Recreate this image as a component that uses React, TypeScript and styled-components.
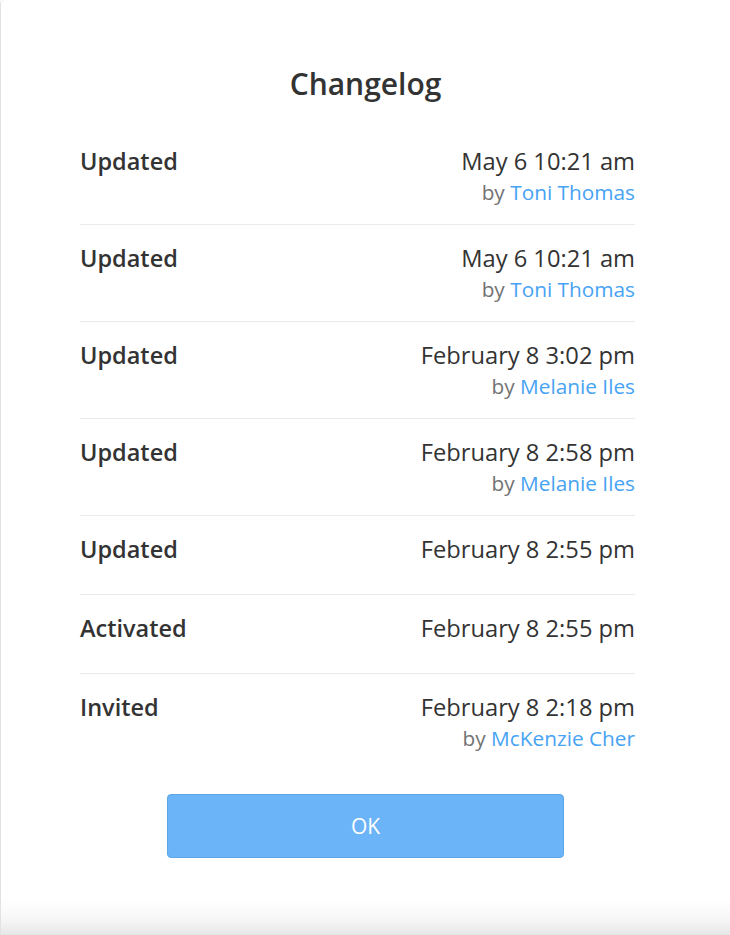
import styled, { createGlobalStyle } from "styled-components";

const GlobalStyle = createGlobalStyle`
  html, body {
    margin: 0;
    padding: 0;
    background: #ffffff;
  }
  body {
    font-family: "Open Sans", "Liberation Sans", sans-serif;
    color: #333333;
  }
`;

interface Change {
  action: string;
  date: string;
  author?: string;
}

const changes: Change[] = [
  { action: "Updated", date: "May 6 10:21 am", author: "Toni Thomas" },
  { action: "Updated", date: "May 6 10:21 am", author: "Toni Thomas" },
  { action: "Updated", date: "February 8 3:02 pm", author: "Melanie Iles" },
  { action: "Updated", date: "February 8 2:58 pm", author: "Melanie Iles" },
  { action: "Updated", date: "February 8 2:55 pm" },
  { action: "Activated", date: "February 8 2:55 pm" },
  { action: "Invited", date: "February 8 2:18 pm", author: "McKenzie Cher" },
];

export default function App() {
  return (
    <>
      <GlobalStyle />
      <Modal>
        <Title>Changelog</Title>
        <List>
          {changes.map((c, i) => (
            <Row key={i}>
              <Action>{c.action}</Action>
              <Meta>
                <When>{c.date}</When>
                {c.author && (
                  <By>
                    by <Author href="#">{c.author}</Author>
                  </By>
                )}
              </Meta>
            </Row>
          ))}
        </List>
        <Footer>
          <OkButton type="button">OK</OkButton>
        </Footer>
      </Modal>
    </>
  );
}

const Modal = styled.div`
  box-sizing: border-box;
  width: 730px;
  height: 935px;
  border-left: 1px solid #e2e2e2;
  border-top-left-radius: 4px;
  background: linear-gradient(
    to bottom,
    #ffffff 0,
    #ffffff 900px,
    #f6f6f6 920px,
    #e6e6e6 935px
  );
  padding-top: 60px;
  display: flex;
  flex-direction: column;
`;

const Title = styled.h1`
  margin: 0;
  font-size: 30px;
  font-weight: 600;
  line-height: 48px;
  text-align: center;
  color: #333333;
`;

const List = styled.div`
  margin: 20px 95px 0 79px;
  display: flex;
  flex-direction: column;
`;

const Row = styled.div`
  display: flex;
  justify-content: space-between;
  align-items: flex-start;
  padding: 18px 0 16px;
  border-bottom: 1px solid #ebebeb;

  &:last-child {
    border-bottom: none;
  }
`;

const Action = styled.div`
  font-size: 23.5px;
  font-weight: 600;
  line-height: 30px;
  color: #333333;
`;

const Meta = styled.div`
  display: flex;
  flex-direction: column;
  align-items: flex-end;
  min-height: 44px;
`;

const When = styled.div`
  font-size: 23.7px;
  line-height: 30px;
  color: #333333;
`;

const By = styled.div`
  font-size: 20.8px;
  line-height: 32px;
  color: #737373;
`;

const Author = styled.a`
  color: #47a3f3;
  text-decoration: none;
`;

const Footer = styled.div`
  display: flex;
  justify-content: center;
  margin-top: 24px;
`;

const OkButton = styled.button`
  width: 397px;
  height: 64px;
  border: 1px solid #5ea6e6;
  border-radius: 4px;
  background: #6cb4f8;
  color: #ffffff;
  font-family: "Open Sans", "Liberation Sans", sans-serif;
  font-size: 21px;
  cursor: pointer;
`;
